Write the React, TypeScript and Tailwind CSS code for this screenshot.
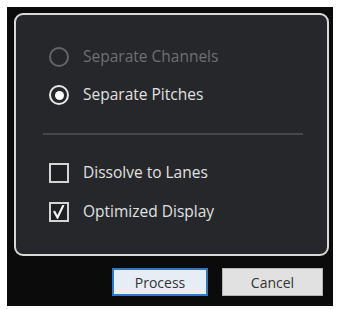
import React from 'react';

const font = { fontFamily: '"Open Sans", "Liberation Sans", sans-serif' };

const Radio = ({ label, checked, disabled }: { label: string; checked?: boolean; disabled?: boolean }) => (
  <div className="flex items-center h-[38px]">
    <div
      className={`w-[20px] h-[20px] rounded-full border-2 flex items-center justify-center ${
        disabled ? 'border-[#626467]' : 'border-[#e8e8e8]'
      }`}
    >
      {checked && <div className="w-[9px] h-[9px] rounded-full bg-white" />}
    </div>
    <span className={`ml-[14px] text-[15.5px] ${disabled ? 'text-[#6e7073]' : 'text-[#e0e0e0]'}`}>{label}</span>
  </div>
);

const Checkbox = ({ label, checked }: { label: string; checked?: boolean }) => (
  <div className="flex items-center h-[39px]">
    <div className="w-[20px] h-[20px] border-2 border-[#d4d4d4] bg-[#1e2023] flex items-center justify-center">
      {checked && (
        <svg width="14" height="14" viewBox="0 0 14 14" fill="none">
          <path d="M2.5 7 L5.5 12.5 L11 1" stroke="#f0f0f0" strokeWidth="2.2" strokeLinecap="square" />
        </svg>
      )}
    </div>
    <span className="ml-[14px] text-[15.5px] text-[#e0e0e0]">{label}</span>
  </div>
);

export default function App() {
  return (
    <div className="w-[337px] h-[309px] bg-white pt-[7px] pl-[7px]" style={font}>
      <div className="w-[326px] h-[299px] bg-[#0b0b0b] pt-[6px] pl-[7px]">
        <div className="w-[315px] h-[243px] rounded-[9px] border-2 border-[#d8d8d8] bg-[#25272b] pt-[23px] pl-[33px]">
          <Radio label="Separate Channels" disabled />
          <Radio label="Separate Pitches" checked />
          <div className="mt-[19px] ml-[-6px] w-[260px] h-[2px] bg-[#45474b]" />
          <div className="mt-[18px]">
            <Checkbox label="Dissolve to Lanes" />
            <Checkbox label="Optimized Display" checked />
          </div>
        </div>
        <div className="flex mt-[12px] ml-[98px] gap-[14px]">
          <button className="w-[96px] h-[28px] bg-[#e6edf4] border-2 border-[#2f78c8] text-[14px] text-[#333] flex items-center justify-center">
            Process
          </button>
          <button className="w-[101px] h-[28px] bg-[#e1e1e1] border border-[#b4b4b4] text-[14px] text-[#333] flex items-center justify-center">
            Cancel
          </button>
        </div>
      </div>
    </div>
  );
}
